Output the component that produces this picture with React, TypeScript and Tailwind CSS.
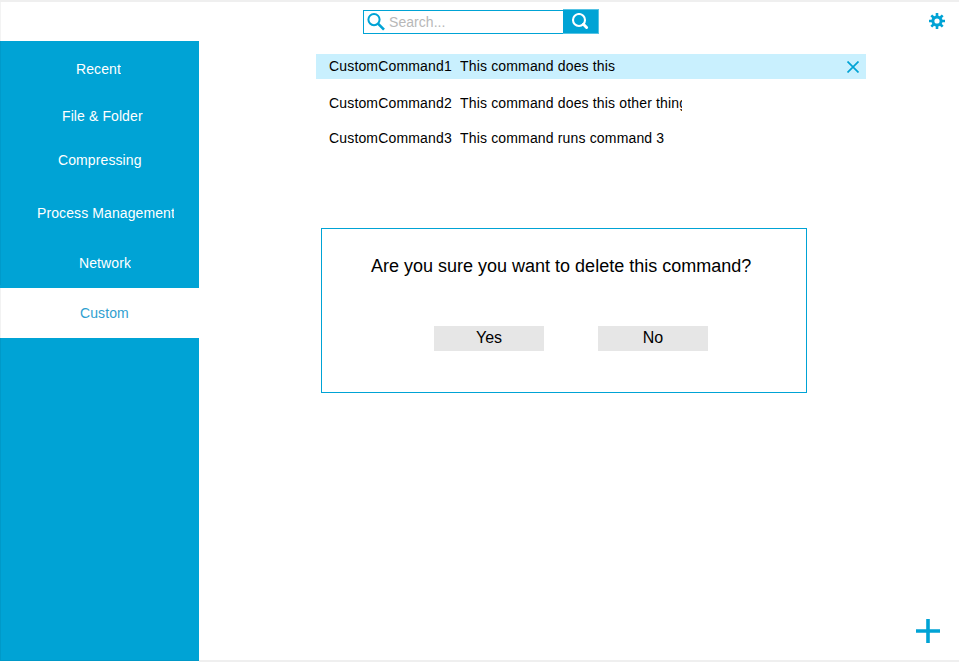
const categories = [
  { name: "Recent", box: "h-[56px] pl-[76px] text-white" },
  { name: "File & Folder", box: "h-[38px] pl-[62px] text-white" },
  { name: "Compressing", box: "h-[50px] pl-[58px] text-white" },
  { name: "Process Management", box: "h-[56px] pl-[37px] text-white" },
  { name: "Network", box: "mb-[3px] h-[44px] pl-[79px] text-white" },
  { name: "Custom", box: "h-[50px] bg-white pl-[80px] text-[#2f9fd0]" },
];

const commands = [
  { name: "CustomCommand1", description: "This command does this", selected: true },
  { name: "CustomCommand2", description: "This command does this other thing", selected: false },
  { name: "CustomCommand3", description: "This command runs command 3", selected: false },
];

function Header() {
  return (
    <header className="flex h-[39px] shrink-0 items-start border-l border-[#f3f3f3]">
      <div className="ml-[362px] mt-[8px] flex h-[24px] w-[200px] items-center border border-r-0 border-[#00a3d5]">
        <svg className="ml-[3px] shrink-0" width="18" height="18" viewBox="0 0 18 18" fill="none" stroke="#00a3d5" strokeWidth="2">
          <circle cx="7" cy="6.6" r="5.6" />
          <path d="M11 10.6l6 6" strokeWidth="2.6" />
        </svg>
        <span className="ml-[4px] text-[14px] leading-[22px] tracking-[0.05px] text-[#b8b8b8]">Search...</span>
      </div>
      <button className="mt-[7px] flex h-[25px] w-[36px] items-start border border-l-0 border-[#55c3e4] bg-[#00a3d5] pl-[8px] pt-[3px]">
        <svg width="18" height="17" viewBox="0 0 18 17" fill="none" stroke="#fff">
          <circle cx="8" cy="7" r="6" strokeWidth="2.1" />
          <path d="M12.4 11.3l3.2 3.2" strokeWidth="3" strokeLinecap="round" />
        </svg>
      </button>
      <svg className="ml-auto mr-[14px] mt-[11px]" width="16" height="16" viewBox="0 0 16 16" fill="none" stroke="#00a3d5">
        <circle cx="8" cy="8" r="4.1" strokeWidth="3" />
        <path d="M8 0v3M8 13v3M0 8h3M13 8h3M2.3 2.3l2.2 2.2M11.5 11.5l2.2 2.2M13.7 2.3l-2.2 2.2M4.5 11.5l-2.2 2.2" strokeWidth="2.6" />
      </svg>
    </header>
  );
}

function Sidebar() {
  return (
    <nav className="h-[620px] w-[199px] shrink-0 border-b border-[#0099c8] bg-[#00a3d5]">
      {categories.map((category) => (
        <div key={category.name} className={`flex items-center border-l border-l-black/5 text-[14px] leading-[20px] tracking-[0.1px] ${category.box}`}>
          <span className="-ml-px max-w-[137px] overflow-hidden whitespace-nowrap">{category.name}</span>
        </div>
      ))}
      <div className="h-[322px] border-l border-l-[#0099c8]" />
    </nav>
  );
}

function DeleteDialog() {
  return (
    <section className="ml-[122px] mt-[72px] h-[165px] w-[486px] border border-[#00a3d5]">
      <h1 className="ml-[49px] mt-[25px] whitespace-nowrap text-[18px] leading-[24px]">Are you sure you want to delete this command?</h1>
      <div className="ml-[112px] mt-[48px] flex gap-[54px]">
        <button className="h-[25px] w-[110px] bg-[#e6e6e6] pb-[2px] text-[16px] leading-[23px]">Yes</button>
        <button className="h-[25px] w-[110px] bg-[#e6e6e6] pb-[2px] text-[16px] leading-[23px]">No</button>
      </div>
    </section>
  );
}

export default function App() {
  return (
    <div className="flex h-[662px] w-[959px] flex-col overflow-hidden border-t-2 border-[#efefef] bg-white font-['Liberation_Sans',Arial,sans-serif] text-black">
      <Header />
      <div className="flex h-[621px] shrink-0">
        <Sidebar />
        <main className="flex flex-1 flex-col border-b-2 border-[#efefef] pt-[13px]">
          <ul className="ml-[117px] w-[550px] text-[14px] tracking-[0.16px]">
            {commands.map((command) => (
              <li
                key={command.name}
                className={`flex items-center pl-[13px] ${command.selected ? "mb-[7px] h-[25px] bg-[#c9f0fe]" : "h-[35px]"}`}
              >
                <span className="w-[131px]">{command.name}</span>
                <span className="max-w-[222px] overflow-hidden whitespace-nowrap">{command.description}</span>
                {command.selected && (
                  <svg className="ml-auto mr-[7px]" width="12" height="12" viewBox="0 0 12 12" stroke="#00a3d5" strokeWidth="1.7">
                    <path d="M.5 .5l11 11M11.5 .5l-11 11" />
                  </svg>
                )}
              </li>
            ))}
          </ul>
          <DeleteDialog />
          <button className="mb-[17px] ml-auto mr-[19px] mt-auto">
            <svg width="24" height="24" viewBox="0 0 24 24" stroke="#00a3d5" strokeWidth="3.6">
              <path d="M12 0v24M0 12h24" />
            </svg>
          </button>
        </main>
      </div>
    </div>
  );
}
